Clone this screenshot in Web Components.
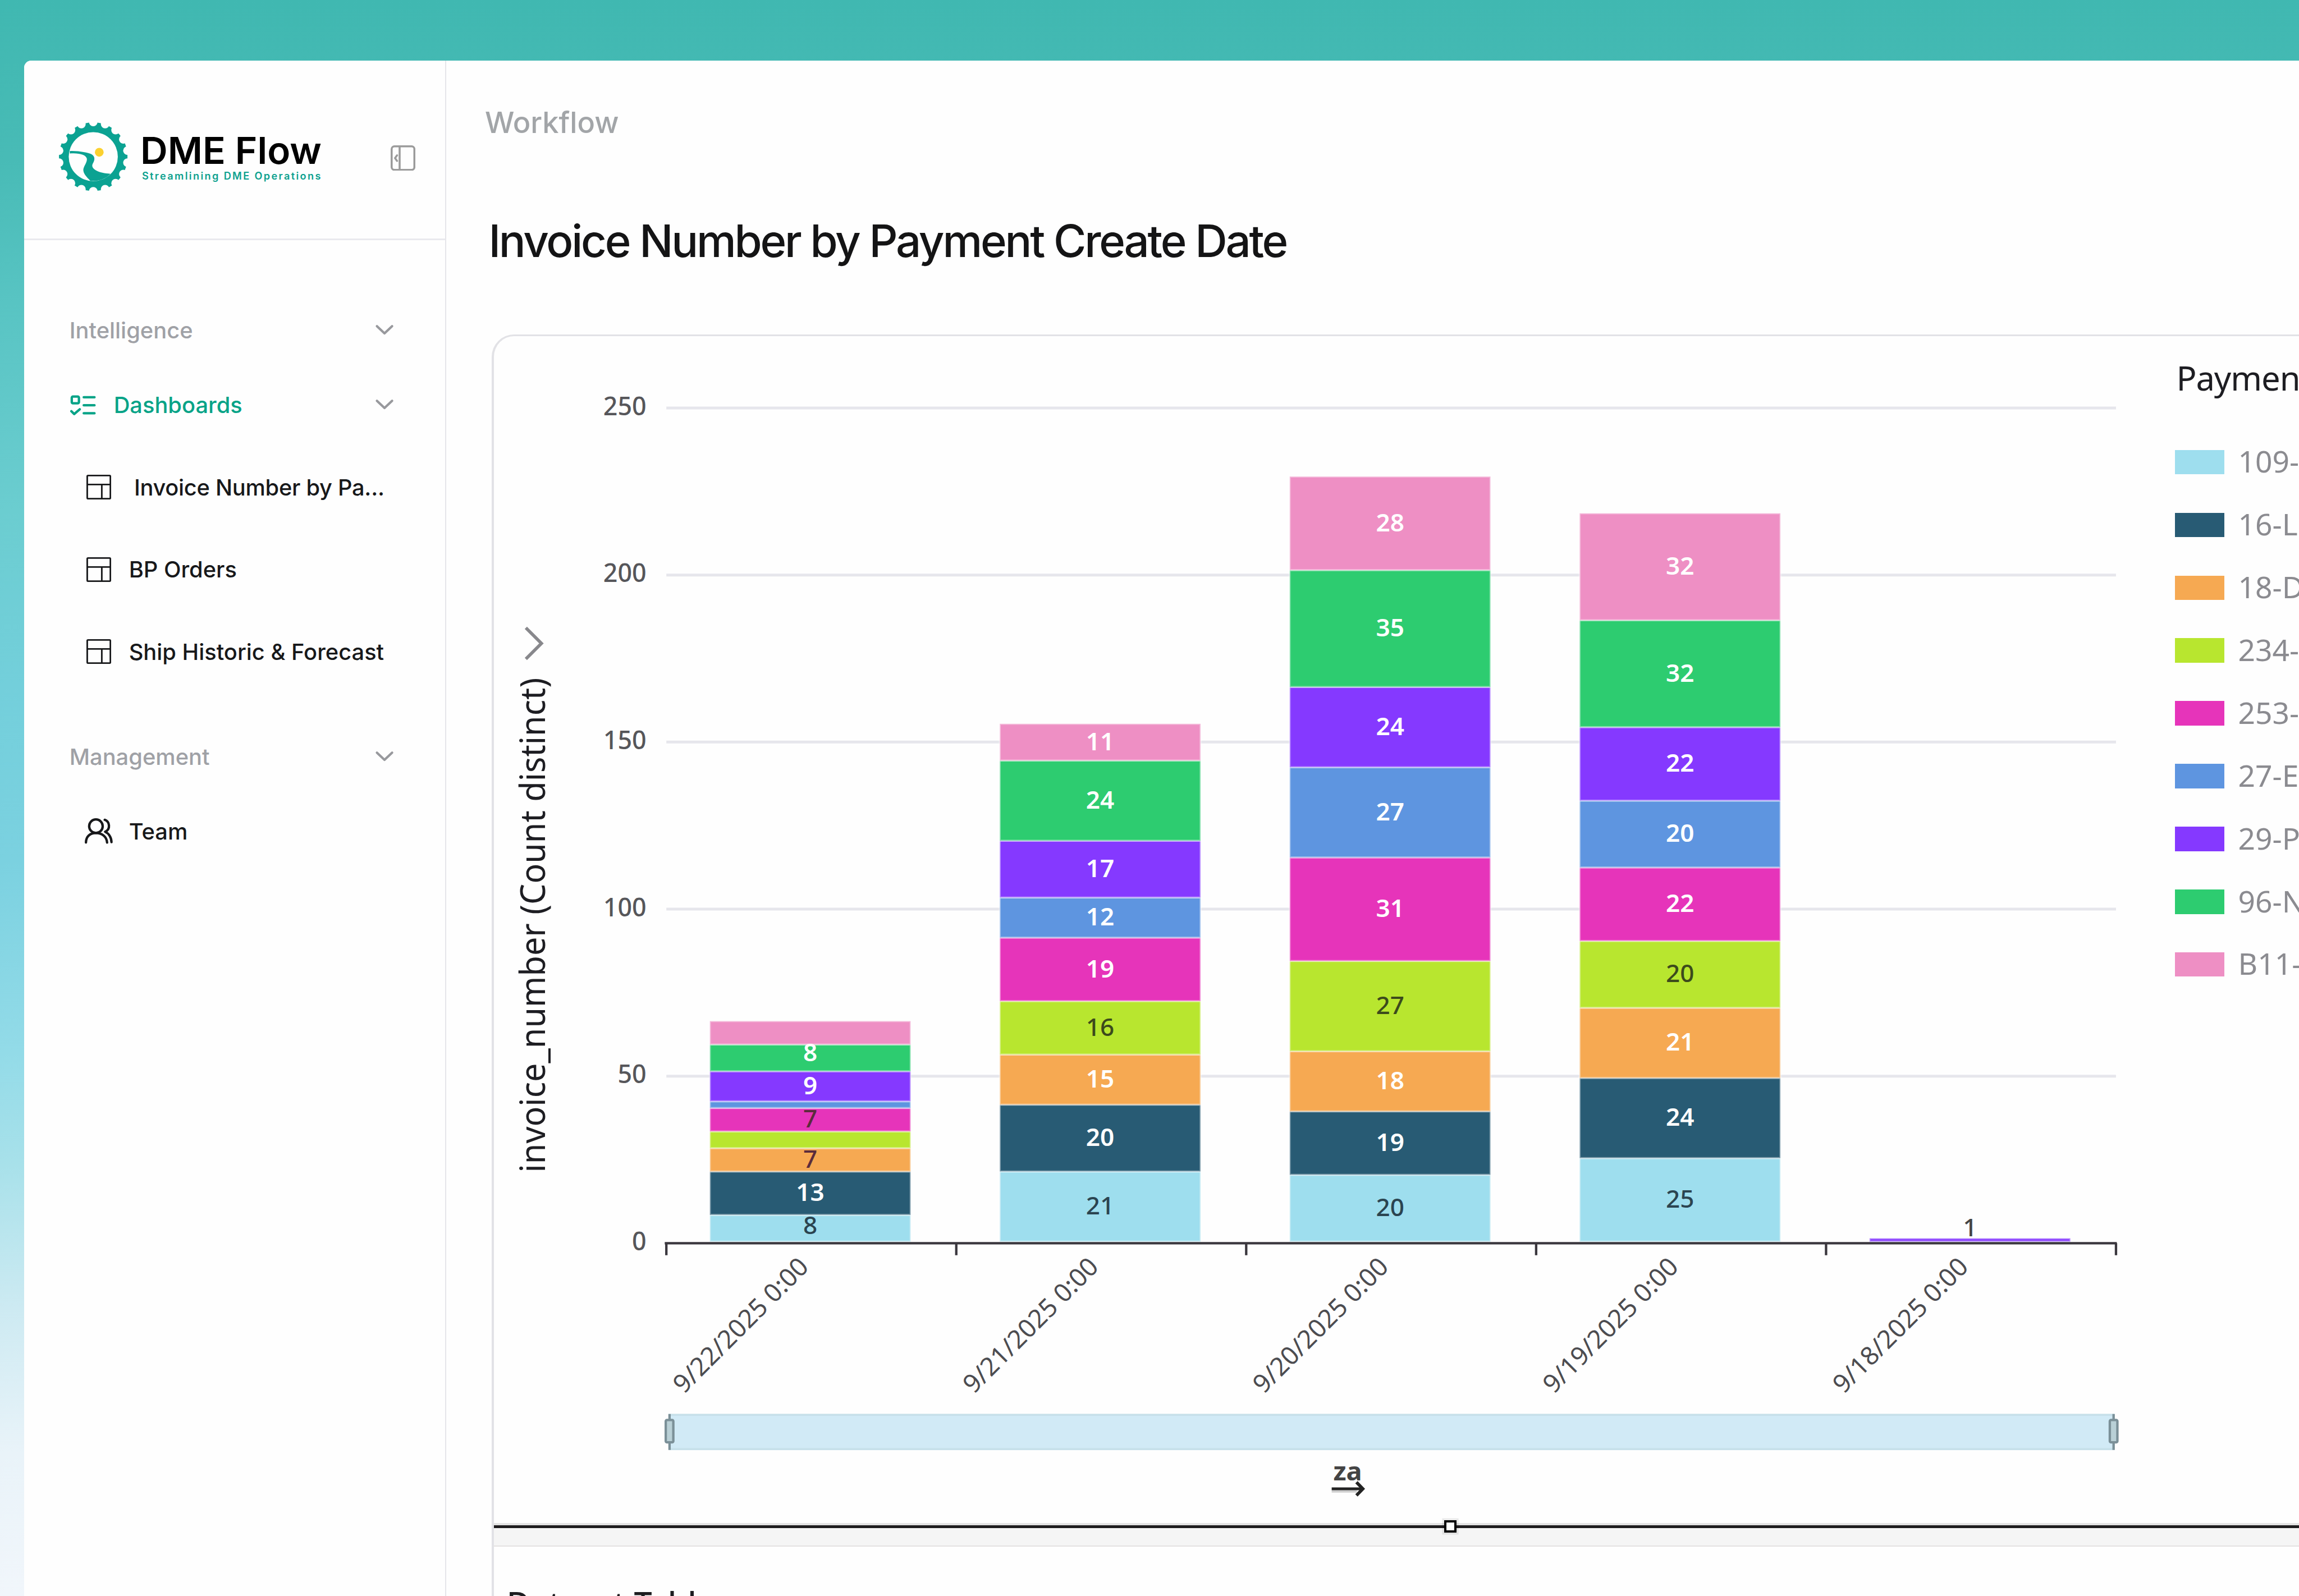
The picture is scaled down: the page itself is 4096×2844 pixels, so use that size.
<!DOCTYPE html>
<html lang="en">
<head>
<meta charset="UTF-8">
<title>DME Flow</title>
<style>
    /* 1rem = 100 design units, the design is 5760 units wide */
    html {
        font-size: calc(100vw / 57.6);
    }
    body {
        margin: 0;
        height: 100vh;
        overflow: hidden;
        font-family: Inter, "Liberation Sans", sans-serif;
        color: #17181a;
    }
</style>
</head>
<body>
<app-shell>
    <side-bar slot="sidebar">
        <nav-section label="Intelligence"></nav-section>
        <nav-section label="Dashboards" icon="checklist" active>
            <nav-item icon="layout" indent>Invoice Number by Pa...</nav-item>
            <nav-item icon="layout">BP Orders</nav-item>
            <nav-item icon="layout">Ship Historic &amp; Forecast</nav-item>
        </nav-section>
        <nav-section label="Management" spaced>
            <nav-item icon="team">Team</nav-item>
        </nav-section>
    </side-bar>
    <page-header crumb="Workflow">Invoice Number by Payment Create Date</page-header>
    <dashboard-card>
        <stacked-chart slot="chart" axis-title="invoice_number (Count distinct)"></stacked-chart>
        <chart-legend slot="chart" label="Payment"></chart-legend>
        <span slot="table">Dataset Table</span>
    </dashboard-card>
</app-shell>

<script>
const SERIES = [
    { name: '109-', color: '#9edeee', text: '#2b4450' },
    { name: '16-L', color: '#285b74', text: '#ffffff' },
    { name: '18-D', color: '#f6a952', text: '#ffffff' },
    { name: '234-', color: '#b8e62f', text: '#3c4a1c' },
    { name: '253-', color: '#e634ba', text: '#ffffff' },
    { name: '27-E', color: '#5e95e0', text: '#ffffff' },
    { name: '29-P', color: '#8539ff', text: '#ffffff' },
    { name: '96-N', color: '#2dcc70', text: '#ffffff' },
    { name: 'B11-', color: '#ee8fc4', text: '#ffffff' },
];

const DAYS = [
    { date: '9/22/2025 0:00', values: [8, 13, 7, 5, 7, 2, 9, 8, 7], hidden: [3, 5, 8], dark: [2, 4], shift: { 0: -6, 7: -12 } },
    { date: '9/21/2025 0:00', values: [21, 20, 15, 16, 19, 12, 17, 24, 11] },
    { date: '9/20/2025 0:00', values: [20, 19, 18, 27, 31, 27, 24, 35, 28] },
    { date: '9/19/2025 0:00', values: [25, 24, 21, 20, 22, 20, 22, 32, 32] },
    { date: '9/18/2025 0:00', values: [0, 0, 0, 0, 0, 0, 1, 0, 0], above: true },
];

const ICONS = {
    chevron: {
        box: '0 0 48 30', w: 0.48, h: 0.3, stroke: 6,
        body: '<path d="M5 4.5 24 22.5 43 4.5"/>',
    },
    collapse: {
        box: '0 0 62 64', w: 0.62, h: 0.64, stroke: 5,
        body: '<rect x="2.5" y="2.5" width="57" height="59" rx="7"/><path d="M22.5 3v58M16 25 11 32l5 7"/>',
    },
    checklist: {
        box: '0 0 64 54', w: 0.64, h: 0.54, stroke: 6,
        body: '<rect x="4" y="5" width="18" height="17" rx="3"/><path d="M3 42l7 7 14-12M34 7h27M34 27h27M34 47h27"/>',
    },
    layout: {
        box: '0 0 62 62', w: 0.62, h: 0.62, stroke: 4,
        body: '<rect x="2" y="2" width="58" height="58" rx="2"/><path d="M2 24.5h58M38.5 24.5V60"/>',
    },
    team: {
        box: '0 0 70 64', w: 0.7, h: 0.64, stroke: 6,
        body: '<circle cx="28" cy="20" r="17"/><path d="M3 61C3 46 13 37 28 37S55 46 56 61M50 4C62 8 66 27 51 34C60 38 67 48 67 60"/>',
    },
};

class AppIcon extends HTMLElement {
    constructor() {
        super();
        this.attachShadow({ mode: 'open' });
    }

    connectedCallback() {
        const icon = ICONS[this.getAttribute('name')];
        this.shadowRoot.innerHTML = `
            <style>
                :host { display: block; flex: none; }
                svg {
                    display: block;
                    width: ${icon.w}rem;
                    height: ${icon.h}rem;
                    fill: none;
                    stroke: currentColor;
                    stroke-width: ${icon.stroke};
                    stroke-linecap: round;
                    stroke-linejoin: round;
                }
            </style>
            <svg viewBox="${icon.box}">${icon.body}</svg>
        `;
    }
}

class BrandLogo extends HTMLElement {
    constructor() {
        super();
        this.attachShadow({ mode: 'open' });
    }

    connectedCallback() {
        // 18 round notches cut out of the disc leave the gear teeth
        let notches = '';
        for (let i = 0; i < 18; i++) {
            const a = (i * 20 + 10) * Math.PI / 180;
            notches += `<circle cx="${(86 + 87 * Math.cos(a)).toFixed(2)}" cy="${(86 + 87 * Math.sin(a)).toFixed(2)}" r="10.8"/>`;
        }
        this.shadowRoot.innerHTML = `
            <style>
                :host { display: block; }
                svg { display: block; width: 6.6rem; height: 1.72rem; overflow: visible; }
                .name { font-size: 93px; font-weight: 600; fill: #000; }
                .tag { font-size: 25.5px; font-weight: 600; fill: #0da18f; }
            </style>
            <svg viewBox="0 0 660 172">
                <mask id="gear">
                    <rect width="172" height="172" fill="#fff"/>
                    <g fill="#000">${notches}<circle cx="86" cy="86" r="61.5"/></g>
                </mask>
                <circle cx="86" cy="86" r="86" fill="#0ba292" mask="url(#gear)"/>
                <path fill="#0ba292" d="M27 72C50 71 72 76 82 80C90 85 91 93 85 103C82 109 83 114 92 120C102 126 115 128 129 129C119 141 101 148 79 147C68 136 61 128 61 119C62 109 71 101 70 91C68 81 50 76 27 78Z"/>
                <circle cx="101" cy="75" r="11" fill="#fbd130"/>
                <text class="name" x="204" y="104" textLength="454" lengthAdjust="spacingAndGlyphs">DME Flow</text>
                <text class="tag" x="208" y="144" textLength="448">Streamlining DME Operations</text>
            </svg>
        `;
    }
}

class NavItem extends HTMLElement {
    constructor() {
        super();
        this.attachShadow({ mode: 'open' });
    }

    connectedCallback() {
        this.shadowRoot.innerHTML = `
            <style>
                :host {
                    display: flex;
                    align-items: center;
                    height: 2.06rem;
                    padding-left: 1.57rem;
                    font-size: 0.56rem;
                    font-weight: 500;
                    white-space: nowrap;
                }
                .icon { width: 0.7rem; margin-left: -0.04rem; display: flex; justify-content: center; }
                .label { margin-left: 0.4rem; }
                :host([indent]) .label { margin-left: 0.53rem; letter-spacing: -0.004rem; }
            </style>
            <div class="icon"><app-icon name="${this.getAttribute('icon')}"></app-icon></div>
            <span class="label"><slot></slot></span>
        `;
    }
}

class NavSection extends HTMLElement {
    constructor() {
        super();
        this.attachShadow({ mode: 'open' });
    }

    connectedCallback() {
        const icon = this.getAttribute('icon');
        this.shadowRoot.innerHTML = `
            <style>
                :host { display: block; }
                :host([active]) { margin-top: 0.87rem; }
                :host([spaced]) { margin-top: 1.1rem; }
                .title {
                    display: flex;
                    align-items: center;
                    height: 1rem;
                    padding: 0 1.28rem 0 1.14rem;
                    font-size: 0.56rem;
                    font-weight: 500;
                    color: #9fa1a6;
                }
                .title app-icon:last-child { margin-left: auto; color: #98999d; }
                .lead { margin: 0 0.45rem 0 0.02rem; }
                :host([active]) .title { color: #06a387; }
                .items { padding-top: 0.53rem; }
                :host([spaced]) .items { padding-top: 0.34rem; }
            </style>
            <div class="title">
                ${icon ? `<app-icon class="lead" name="${icon}"></app-icon>` : ''}
                <span>${this.getAttribute('label')}</span>
                <app-icon name="chevron"></app-icon>
            </div>
            ${this.children.length ? '<div class="items"><slot></slot></div>' : ''}
        `;
    }
}

class SideBar extends HTMLElement {
    constructor() {
        super();
        this.attachShadow({ mode: 'open' });
    }

    connectedCallback() {
        this.shadowRoot.innerHTML = `
            <style>
                :host {
                    display: block;
                    box-sizing: border-box;
                    width: 10.58rem;
                    height: 100%;
                    background: #fefefe;
                    border-right: 0.04rem solid #e6e6ea;
                    border-top-left-radius: 0.18rem;
                }
                header {
                    box-sizing: border-box;
                    height: 4.5rem;
                    display: flex;
                    align-items: center;
                    justify-content: space-between;
                    padding: 0.35rem 0.74rem 0 0.88rem;
                    border-bottom: 0.05rem solid #e9e9ee;
                }
                header app-icon { color: #9b9b9b; margin-top: 0.07rem; }
                nav { padding-top: 1.76rem; }
            </style>
            <header>
                <brand-logo></brand-logo>
                <app-icon name="collapse"></app-icon>
            </header>
            <nav><slot></slot></nav>
        `;
    }
}

class PageHeader extends HTMLElement {
    constructor() {
        super();
        this.attachShadow({ mode: 'open' });
    }

    connectedCallback() {
        this.shadowRoot.innerHTML = `
            <style>
                :host { display: block; height: 6.86rem; white-space: nowrap; }
                .crumb {
                    padding: 1.05rem 0 0 0.97rem;
                    font-size: 0.735rem;
                    line-height: 1rem;
                    font-weight: 500;
                    color: #a2a5a8;
                }
                h1 {
                    margin: 1.77rem 0 0 1.06rem;
                    font-size: 1.12rem;
                    line-height: 1.4rem;
                    font-weight: 500;
                    letter-spacing: -0.0405em;
                    color: #141415;
                }
            </style>
            <div class="crumb">${this.getAttribute('crumb')}</div>
            <h1><slot></slot></h1>
        `;
    }
}

class StackedChart extends HTMLElement {
    constructor() {
        super();
        this.attachShadow({ mode: 'open' });
    }

    connectedCallback() {
        this.render();
    }

    render() {
        const left = 1669;
        const base = 3115;
        const barBase = 3111;
        const step = 726.4;
        const unit = 8.372;
        const barWidth = 503;
        const right = left + step * DAYS.length;

        let grid = '';
        for (let v = 0; v <= 250; v += 50) {
            const y = base - v * unit;
            if (v) grid += `<path d="M${left} ${y}H${right}"/>`;
            grid += `<text class="tick" x="1619" y="${y + 18}">${v}</text>`;
        }

        let bars = '';
        let labels = '';
        let axis = `M${left - 4} ${base}H${right + 2}`;
        DAYS.forEach((day, d) => {
            const x = left + d * step + 109;
            const mid = x + barWidth / 2;
            let total = 0;
            axis += `M${left + d * step} ${base}v30`;
            day.values.forEach((value, i) => {
                if (!value) return;
                const y = barBase - (total + value) * unit;
                bars += `<rect x="${x}" y="${y}" width="${barWidth}" height="${value * unit}" fill="${SERIES[i].color}"/>`;
                const shift = day.shift && day.shift[i] || 0;
                let ty = y + value * unit / 2 + 20 + shift;
                let fill = SERIES[i].text;
                if (day.dark && day.dark.includes(i)) fill = '#5b2c3c';
                if (day.above) {
                    ty = y - 5;
                    fill = '#444';
                }
                if (!(day.hidden && day.hidden.includes(i))) {
                    labels += `<text class="value${fill === '#ffffff' ? ' light' : ''}" x="${mid}" y="${ty}" fill="${fill}">${value}</text>`;
                }
                total += value;
            });
            labels += `<text class="date" transform="translate(${left + d * step + 360} 3178) rotate(-45)">${day.date}</text>`;
        });
        axis += `M${right} ${base}v30`;

        const handle = (x) => `
            <path d="M${x} 3543v90"/>
            <rect x="${x - 9.5}" y="3558" width="19" height="56" rx="3"/>
        `;

        this.shadowRoot.innerHTML = `
            <style>
                :host { display: block; width: 42.03rem; height: 29.74rem; flex: none; }
                svg { display: block; width: 100%; height: 100%; font-family: "Noto Sans", "Open Sans", sans-serif; }
                .grid path { stroke: #e6e6ec; stroke-width: 7; }
                .tick { font-size: 63px; font-weight: 500; text-anchor: end; fill: #56565a; }
                .bars rect { stroke: rgba(255, 255, 255, 0.38); stroke-width: 5; }
                .value { font-size: 62px; font-weight: 500; text-anchor: middle; }
                .light { font-weight: 600; }
                .date { font-size: 64px; text-anchor: end; fill: #4c4c50; }
                .axis { stroke: #3a373e; stroke-width: 6; fill: none; }
                .title { font-size: 86px; fill: #1d1d22; }
                .handle { stroke: #7b9098; stroke-width: 6; fill: #b9d0d6; }
                .sort { font-size: 64px; font-weight: 700; fill: #444; }
            </style>
            <svg viewBox="1237 842 4203 2974">
                <path d="M1317 1573 1356 1612 1317 1651" fill="none" stroke="#88888c" stroke-width="8"/>
                <text class="title" transform="translate(1365 2938) rotate(-90)" textLength="1240" lengthAdjust="spacingAndGlyphs">${this.getAttribute('axis-title')}</text>
                <g class="grid">${grid}</g>
                <g class="bars">${bars}</g>
                <path class="axis" d="${axis}"/>
                ${labels}
                <rect x="1677" y="3545" width="3618" height="86" fill="#d1eaf6" stroke="#c6e0ea" stroke-width="5"/>
                <g class="handle">${handle(1677)}${handle(5295)}</g>
                <text class="sort" x="3340" y="3709" textLength="72" lengthAdjust="spacingAndGlyphs">za</text>
                <path d="M3336 3737H3399" stroke="#cfcfcf" stroke-width="6"/>
                <path d="M3336 3730.5H3413" stroke="#222" stroke-width="7"/>
                <path d="M3398 3714 3414 3730.5 3398 3747" stroke="#222" stroke-width="8" fill="none"/>
            </svg>
        `;
    }
}

class ChartLegend extends HTMLElement {
    constructor() {
        super();
        this.attachShadow({ mode: 'open' });
    }

    connectedCallback() {
        const rows = SERIES.map((s) => `
            <li><i style="background:${s.color}"></i><span>${s.name}</span></li>
        `).join('');
        this.shadowRoot.innerHTML = `
            <style>
                :host {
                    display: block;
                    flex: none;
                    padding: 0.45rem 0 0 0.09rem;
                    font-family: "Noto Sans", "Open Sans", sans-serif;
                    white-space: nowrap;
                }
                .label { font-size: 0.84rem; line-height: 1.2rem; color: #1d1d22; padding-left: 0.03rem; letter-spacing: -0.015rem; }
                ul { list-style: none; margin: 0.72rem 0 0; padding: 0; }
                li { display: flex; align-items: center; height: 1.574rem; }
                i { width: 1.23rem; height: 0.61rem; }
                span { margin: -0.05rem 0 0 0.35rem; font-size: 0.75rem; color: #8b8b90; }
            </style>
            <div class="label">${this.getAttribute('label')}</div>
            <ul>${rows}</ul>
        `;
    }
}

class DashboardCard extends HTMLElement {
    constructor() {
        super();
        this.attachShadow({ mode: 'open' });
    }

    connectedCallback() {
        this.shadowRoot.innerHTML = `
            <style>
                :host {
                    display: block;
                    margin-left: 1.14rem;
                    flex: 1;
                    min-height: 0;
                    overflow: hidden;
                    border: solid #e2e2e6;
                    border-width: 0.05rem 0 0 0.06rem;
                    border-top-left-radius: 0.56rem;
                    background: #fefefe;
                }
                .chart { display: flex; height: 29.74rem; }
                .splitter {
                    position: relative;
                    box-sizing: border-box;
                    height: 0.6rem;
                    background: #f5f5f5;
                    border-top: 0.07rem solid #e2e2e2;
                    border-bottom: 0.03rem solid #e4e1e1;
                }
                .splitter::before { content: ""; display: block; height: 0.07rem; background: #1f1d1f; }
                .grip {
                    position: absolute;
                    left: 23.8rem;
                    top: -0.13rem;
                    width: 0.2rem;
                    height: 0.2rem;
                    border: 0.07rem solid #000;
                    background: #fff;
                    box-shadow: 0 0 0 0.05rem rgba(0, 0, 0, 0.08);
                }
                .table {
                    padding: 0.82rem 0 0 0.32rem;
                    font-family: "Noto Sans", "Open Sans", sans-serif;
                    font-size: 0.805rem;
                    font-weight: 500;
                    line-height: 1.2rem;
                    color: #1d1d20;
                    white-space: nowrap;
                }
            </style>
            <div class="chart"><slot name="chart"></slot></div>
            <div class="splitter"><div class="grip"></div></div>
            <div class="table"><slot name="table"></slot></div>
        `;
    }
}

class AppShell extends HTMLElement {
    constructor() {
        super();
        this.attachShadow({ mode: 'open' });
    }

    connectedCallback() {
        this.shadowRoot.innerHTML = `
            <style>
                :host {
                    display: block;
                    box-sizing: border-box;
                    height: 100vh;
                    padding: 1.52rem 0 0 0.6rem;
                    overflow: hidden;
                    background: linear-gradient(180deg, #40b8b1 0, #48bbb6 10%, #58c4c3 19%, #6bcdd0 32%, #73cfdb 43%, #7bd1e0 54%, #93dbe8 66%, #a8e1ea 73%, #cdeaf2 82%, #e9f3f9 91%, #f1f6fb 100%);
                }
                .window {
                    display: flex;
                    height: 100%;
                    background: #fefefe;
                    border-top-left-radius: 0.18rem;
                }
                main { flex: 1; min-width: 0; display: flex; flex-direction: column; }
            </style>
            <div class="window">
                <slot name="sidebar"></slot>
                <main><slot></slot></main>
            </div>
        `;
    }
}

customElements.define('app-icon', AppIcon);
customElements.define('brand-logo', BrandLogo);
customElements.define('nav-item', NavItem);
customElements.define('nav-section', NavSection);
customElements.define('side-bar', SideBar);
customElements.define('page-header', PageHeader);
customElements.define('stacked-chart', StackedChart);
customElements.define('chart-legend', ChartLegend);
customElements.define('dashboard-card', DashboardCard);
customElements.define('app-shell', AppShell);
</script>
</body>
</html>
